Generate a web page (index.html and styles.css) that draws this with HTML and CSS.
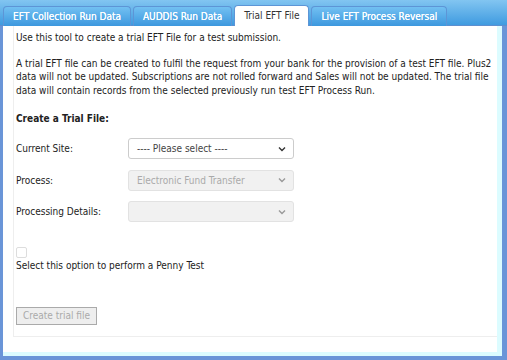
FILE: index.html
```html
<!DOCTYPE html>
<html>
<head>
<meta charset="utf-8">
<link rel="stylesheet" href="styles.css">
</head>
<body>
<div class="frame">
  <div class="tabbar">
    <div class="tab">EFT Collection Run Data</div>
    <div class="tab">AUDDIS Run Data</div>
    <div class="tab active">Trial EFT File</div>
    <div class="tab">Live EFT Process Reversal</div>
  </div>
  <div class="body">
    <div class="panel">
      <p class="intro">Use this tool to create a trial EFT File for a test submission.</p>
      <p class="desc">A trial EFT file can be created to fulfil the request from your bank for the provision of a test EFT file. Plus2 data will not be updated. Subscriptions are not rolled forward and Sales will not be updated. The trial file data will contain records from the selected previously run test EFT Process Run.</p>
      <h3 class="heading">Create a Trial File:</h3>
      <div class="form">
        <label class="lbl">Current Site:</label>
        <div class="sel"><span>---- Please select ----</span><svg width="8" height="6" viewBox="0 0 8 6"><path d="M1 1.5 L4 4.5 L7 1.5" fill="none" stroke="#333" stroke-width="1.4"/></svg></div>
        <label class="lbl">Process:</label>
        <div class="sel dis"><span>Electronic Fund Transfer</span><svg width="8" height="6" viewBox="0 0 8 6"><path d="M1 1.5 L4 4.5 L7 1.5" fill="none" stroke="#999" stroke-width="1.4"/></svg></div>
        <label class="lbl">Processing Details:</label>
        <div class="sel dis"><span></span><svg width="8" height="6" viewBox="0 0 8 6"><path d="M1 1.5 L4 4.5 L7 1.5" fill="none" stroke="#999" stroke-width="1.4"/></svg></div>
      </div>
      <div class="check"><span class="box"></span></div>
      <div class="penny">Select this option to perform a Penny Test</div>
      <div class="btn">Create trial file</div>
    </div>
  </div>
</div>
</body>
</html>
```

FILE: styles.css
```css
html, body { margin: 0; padding: 0; background: #fff; }
body { font-family: "DejaVu Sans Condensed", "DejaVu Sans", sans-serif; font-stretch: condensed; font-size: 10px; color: #222; }
.frame {
  width: 507px; height: 360px; box-sizing: border-box;
  border-left: 3px solid #6a95d8; border-right: 5px solid #6a95d8; border-bottom: 4px solid #6a95d8;
  background: #dcfcff;
  display: flex; flex-direction: column;
}
.tabbar {
  height: 25px; flex: none;
  background: linear-gradient(#82c5f1, #3f9be0);
  display: flex; align-items: flex-end; gap: 2px;
  padding-left: 3px;
  border-bottom: 1px solid #5d8fcf;
  margin: 0 -5px 0 -3px;
}
.tab {
  flex: none; white-space: nowrap;
  height: 19px; line-height: 19px; padding: 0 9px;
  color: #fff; font-weight: normal;
  background: linear-gradient(#72c0f2, #3d98de);
  border: 1px solid #5d95d6; border-bottom: none;
  border-radius: 4px 4px 0 0;
  margin-bottom: -1px;
  text-shadow: 0 0 0.4px #fff;
}
.tab.active { background: #fff; color: #333; height: 20px; text-shadow: none; }
.body { flex: 1; background: #fff; margin: 0 5px 4px 0; padding: 0 0 15px 10px; display: flex; }
.panel { flex: 1; border-left: 1px solid #eee; border-bottom: 1px solid #eee; padding: 5px 0 0 2px; }
p { margin: 0; line-height: 13.5px; }
.desc { margin-top: 12px; }
.heading { margin: 16px 0 0; font-size: 10px; font-weight: bold; }
.form { display: grid; grid-template-columns: 112px 166px; row-gap: 10.5px; margin-top: 14px; align-items: center; }
.sel {
  height: 21px; box-sizing: border-box; border: 1px solid #ccc; border-radius: 3px;
  display: flex; align-items: center; justify-content: space-between; padding: 0 7px 0 8px; color: #444;
}
.sel.dis { background: #f1f1f1; color: #aaa; border-color: #e2e2e2; }
.check { margin-top: 25px; height: 10px; }
.box { display: block; width: 9px; height: 9px; border: 1px solid #ddd; border-radius: 2px; }
.penny { margin-top: 3px; }
.btn {
  margin-top: 36px; width: 81px; height: 18px; box-sizing: border-box;
  border: 1px solid #aaa; background: #eee; color: #aaa; text-align: center; line-height: 16px;
}
```
